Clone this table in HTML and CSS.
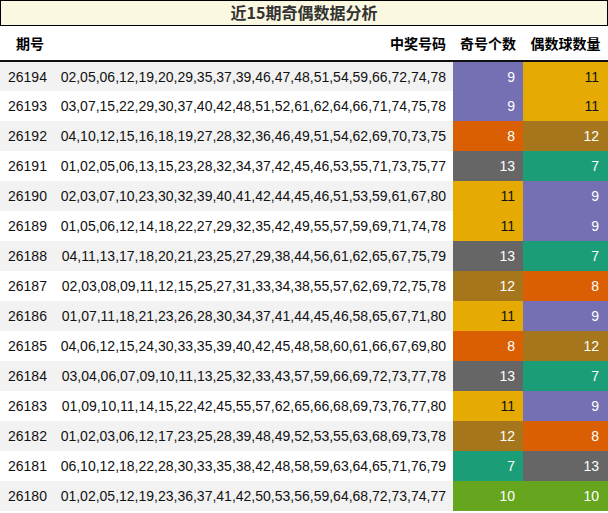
FILE: index.html
```html
<!DOCTYPE html>
<html lang="zh">
<head>
<meta charset="utf-8">
<link rel="stylesheet" href="styles.css">
</head>
<body>
<div class="title">近15期奇偶数据分析</div>
<table class="grid">
  <colgroup>
    <col class="c-issue"><col class="c-nums"><col class="c-odd"><col class="c-even">
  </colgroup>
  <thead>
    <tr><th class="h-issue">期号</th><th class="h-nums">中奖号码</th><th class="h-center">奇号个数</th><th class="h-center">偶数球数量</th></tr>
  </thead>
  <tbody>
    <tr><td>26194</td><td class="nums">02,05,06,12,19,20,29,35,37,39,46,47,48,51,54,59,66,72,74,78</td><td class="v v9">9</td><td class="v v11">11</td></tr>
    <tr><td>26193</td><td class="nums">03,07,15,22,29,30,37,40,42,48,51,52,61,62,64,66,71,74,75,78</td><td class="v v9">9</td><td class="v v11">11</td></tr>
    <tr><td>26192</td><td class="nums">04,10,12,15,16,18,19,27,28,32,36,46,49,51,54,62,69,70,73,75</td><td class="v v8">8</td><td class="v v12">12</td></tr>
    <tr><td>26191</td><td class="nums">01,02,05,06,13,15,23,28,32,34,37,42,45,46,53,55,71,73,75,77</td><td class="v v13">13</td><td class="v v7">7</td></tr>
    <tr><td>26190</td><td class="nums">02,03,07,10,23,30,32,39,40,41,42,44,45,46,51,53,59,61,67,80</td><td class="v v11">11</td><td class="v v9">9</td></tr>
    <tr><td>26189</td><td class="nums">01,05,06,12,14,18,22,27,29,32,35,42,49,55,57,59,69,71,74,78</td><td class="v v11">11</td><td class="v v9">9</td></tr>
    <tr><td>26188</td><td class="nums">04,11,13,17,18,20,21,23,25,27,29,38,44,56,61,62,65,67,75,79</td><td class="v v13">13</td><td class="v v7">7</td></tr>
    <tr><td>26187</td><td class="nums">02,03,08,09,11,12,15,25,27,31,33,34,38,55,57,62,69,72,75,78</td><td class="v v12">12</td><td class="v v8">8</td></tr>
    <tr><td>26186</td><td class="nums">01,07,11,18,21,23,26,28,30,34,37,41,44,45,46,58,65,67,71,80</td><td class="v v11">11</td><td class="v v9">9</td></tr>
    <tr><td>26185</td><td class="nums">04,06,12,15,24,30,33,35,39,40,42,45,48,58,60,61,66,67,69,80</td><td class="v v8">8</td><td class="v v12">12</td></tr>
    <tr><td>26184</td><td class="nums">03,04,06,07,09,10,11,13,25,32,33,43,57,59,66,69,72,73,77,78</td><td class="v v13">13</td><td class="v v7">7</td></tr>
    <tr><td>26183</td><td class="nums">01,09,10,11,14,15,22,42,45,55,57,62,65,66,68,69,73,76,77,80</td><td class="v v11">11</td><td class="v v9">9</td></tr>
    <tr><td>26182</td><td class="nums">01,02,03,06,12,17,23,25,28,39,48,49,52,53,55,63,68,69,73,78</td><td class="v v12">12</td><td class="v v8">8</td></tr>
    <tr><td>26181</td><td class="nums">06,10,12,18,22,28,30,33,35,38,42,48,58,59,63,64,65,71,76,79</td><td class="v v7">7</td><td class="v v13">13</td></tr>
    <tr><td>26180</td><td class="nums">01,02,05,12,19,23,36,37,41,42,50,53,56,59,64,68,72,73,74,77</td><td class="v v10">10</td><td class="v v10">10</td></tr>
  </tbody>
</table>
</body>
</html>
```
FILE: styles.css
```css
html, body {
  margin: 0;
  padding: 0;
  background: #ffffff;
}
body {
  width: 608px;
  font-family: "Liberation Sans", Arial, "Noto Sans CJK SC", sans-serif;
  font-size: 14px;
  color: #111;
}
.title {
  box-sizing: border-box;
  height: 26px;
  border: 1px solid #000;
  background: #fbf8e1;
  color: #333;
  font-family: "Noto Sans CJK SC", sans-serif;
  font-weight: bold;
  font-size: 16px;
  line-height: 23px;
  text-align: center;
}
.grid {
  width: 608px;
  border-collapse: collapse;
  table-layout: fixed;
}
.c-issue { width: 54px; }
.c-odd { width: 70px; }
.c-even { width: 85px; }
.grid th {
  height: 34px;
  padding: 0 7px;
  font-family: "Noto Sans CJK SC", sans-serif;
  font-weight: bold;
  font-size: 14px;
  color: #000;
  border-bottom: 2px solid #111;
  white-space: nowrap;
}
.grid th.h-issue { text-align: left; padding-left: 16px; padding-right: 0; }
.h-nums { text-align: right; }
.grid th.h-center { text-align: center; padding: 0; }
.grid td {
  height: 30px;
  padding: 0 0 0 8px;
  box-sizing: border-box;
  white-space: nowrap;
  vertical-align: middle;
}
.grid tbody tr:nth-child(odd) { background: #f2f2f2; }
.grid tbody tr:nth-child(even) { background: #ffffff; }
.grid td.nums {
  text-align: right;
  padding: 0 7px 0 0;
}
.grid td.v {
  text-align: right;
  padding: 0 8px 0 0;
  color: #fff;
}
.grid td.v:last-child { padding-right: 9px; }
.v7 { background: #1b9e77; }
.v8 { background: #d95f02; }
.v9 { background: #7570b3; }
.v10 { background: #66a61e; }
.v11 { background: #e6ab02; color: #111 !important; }
.v12 { background: #a6761d; }
.v13 { background: #666666; }
```
